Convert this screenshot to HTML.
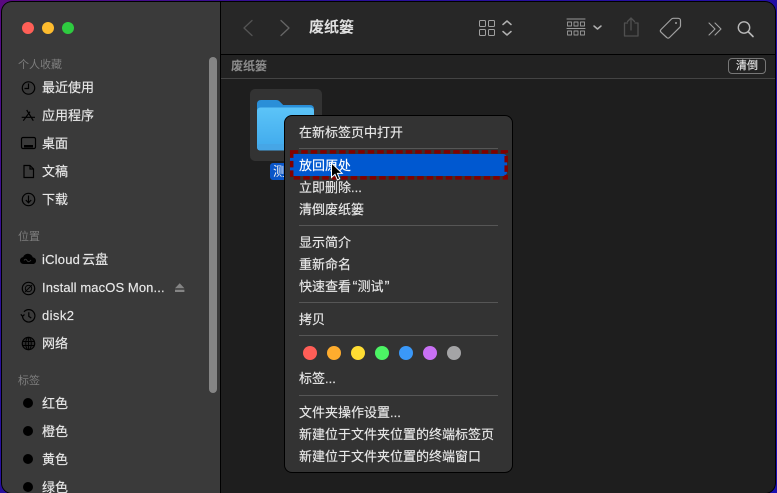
<!DOCTYPE html>
<html><head><meta charset="utf-8">
<style>
*{box-sizing:border-box}
html,body{margin:0;padding:0;width:777px;height:493px;overflow:hidden;background:#1e0f7a}
body{position:relative;font-family:"Liberation Sans","Noto Sans CJK SC",sans-serif}
.a{position:absolute}
.t{position:absolute;white-space:nowrap;line-height:18px;height:18px}
.s{font-size:13px;color:#e8e8e8;left:42px;-webkit-text-stroke:.15px #e8e8e8}
.h{font-size:11px;color:#7d7d7d;left:18px}
.m{font-size:13px;color:#e8e8e8;left:299px;-webkit-text-stroke:.15px #e8e8e8}
.sep{position:absolute;left:299px;width:199px;height:1px;background:#565656}
.d{position:absolute;width:14px;height:14px;border-radius:50%;top:346px}
.b{position:absolute;left:23px;width:10px;height:10px;border-radius:50%;background:#000}
svg{position:absolute;overflow:visible}
</style></head><body>
<div class="a" style="left:0;top:0;width:777px;height:493px;background:linear-gradient(135deg,#5a0a80 0,#2a0f98 25%,#1a0fb0 100%)"></div>
<div class="a" style="left:1px;top:1px;width:775px;height:493px;background:#000;border-radius:11px"></div>
<div class="a" style="left:2px;top:2px;width:773px;height:491px;background:#1e1e1e;border-radius:10px;overflow:hidden">
  <div class="a" style="left:0;top:0;width:218px;height:500px;background:#3a3a3a"></div>
  <div class="a" style="left:218px;top:0;width:1px;height:500px;background:#000"></div>
  <div class="a" style="left:219px;top:0;width:554px;height:52px;background:#272727"></div>
  <div class="a" style="left:219px;top:52px;width:554px;height:1px;background:#000"></div>
  <div class="a" style="left:219px;top:53px;width:554px;height:23px;background:#222"></div>
  <div class="a" style="left:219px;top:76px;width:554px;height:1px;background:#444"></div>
</div>
<div class="a" style="left:22px;top:22px;width:12px;height:12px;border-radius:50%;background:#ff5f57"></div>
<div class="a" style="left:42px;top:22px;width:12px;height:12px;border-radius:50%;background:#febc2e"></div>
<div class="a" style="left:62px;top:22px;width:12px;height:12px;border-radius:50%;background:#2ecb40"></div>
<div class="a" style="left:209px;top:57px;width:8px;height:336px;border-radius:4px;background:#858585"></div>

<div class="t h" style="top:56px">个人收藏</div>
<div class="t s" style="top:79px">最近使用</div>
<div class="t s" style="top:107px">应用程序</div>
<div class="t s" style="top:135px">桌面</div>
<div class="t s" style="top:163px">文稿</div>
<div class="t s" style="top:191px">下载</div>
<div class="t h" style="top:228px">位置</div>
<div class="t s" style="top:251px;letter-spacing:.2px">iCloud<span style="margin-left:2px;letter-spacing:0">云盘</span></div>
<div class="t s" style="top:279px;letter-spacing:.1px">Install macOS Mon...</div>
<div class="t s" style="top:307px;letter-spacing:.4px">disk2</div>
<div class="t s" style="top:335px">网络</div>
<div class="t h" style="top:372px">标签</div>
<div class="t s" style="top:395px">红色</div>
<div class="t s" style="top:423px">橙色</div>
<div class="t s" style="top:451px">黄色</div>
<div class="t s" style="top:479px">绿色</div>

<svg style="left:0;top:0" width="220" height="493" fill="none" stroke="#000" stroke-width="1.2">
<circle cx="28.500" cy="88" r="6.200"/><path d="M28.500 83.500v5h-4"/>
<path d="M26.700 110l6.600 10.700M30 111.700l-6.700 9M21.700 117.300H35"/>
<rect x="21.500" y="137.500" width="14" height="11" rx="1.500"/><rect x="24" y="145" width="9" height="2.500" fill="#000" stroke="none"/>
<path d="M24 165.500h6l3.500 3.500v8.500h-9.500zM30 165.500v3.500h3.500"/>
<circle cx="28.500" cy="199.500" r="6.200"/><path d="M28.500 195.500v7M25.800 200l2.700 2.800 2.700-2.800"/>
<g transform="translate(0 -2)"><path fill="#000" stroke="none" d="M24 266c-2.800 0-4-1.800-4-3.500 0-1.800 1.300-3.200 3.100-3.400.8-2 2.600-3.300 4.700-3.300 2.400 0 4.300 1.500 5 3.600 1.800.2 3.200 1.500 3.200 3.300 0 2-1.400 3.300-3.400 3.300z"/>
<path stroke="#3a3a3a" stroke-width=".9" d="M24 262.500c1-1.700 2-1.700 3 0 1 1.600 2.500 1.600 4-.5"/></g>
<circle cx="28.500" cy="288.500" r="6.200"/><circle cx="28.500" cy="288.500" r="3.200" stroke-width=".9"/><path d="M25 292l7-7" stroke-width=".9"/>
<path d="M24 311.800a6.200 6.200 0 1 1-1.500 4M20.800 314.300l1.700 2 2-1.800M28.800 312.300v4l2.500 1.800"/>
<circle cx="28.500" cy="343.500" r="6.200" fill="#000" fill-opacity=".25"/><ellipse cx="28.500" cy="343.500" rx="2.800" ry="6.200" stroke-width=".9"/><path d="M22.500 341.500h12M22.500 345.500h12M28.500 337v13" stroke-width=".9"/>
</svg>
<svg style="left:175px;top:283px" width="10" height="10"><path d="M4.700 0.300l4.700 5H0z" fill="#858585"/><rect x="0" y="6.700" width="9.400" height="2.300" fill="#858585"/></svg>
<div class="b" style="top:398px"></div>
<div class="b" style="top:426px"></div>
<div class="b" style="top:454px"></div>
<div class="b" style="top:482px"></div>

<svg style="left:240px;top:15px" width="530" height="30" fill="none" stroke-width="1.300" stroke-linecap="round" stroke-linejoin="round">
<path d="M12 5.500L4 13l8 7.500" stroke="#545454"/>
<path d="M41 5.500l8 7.500-8 7.500" stroke="#666"/>
<g stroke="#a0a0a0" stroke-width="1">
<rect x="239.500" y="5.500" width="6" height="6" rx="1"/><rect x="248.500" y="5.500" width="6" height="6" rx="1"/><rect x="239.500" y="14.500" width="6" height="6" rx="1"/><rect x="248.500" y="14.500" width="6" height="6" rx="1"/>
</g>
<path d="M263 9.500l4-3.500 4 3.500M263 16.500l4 3.500 4-3.500" stroke="#b0b0b0" stroke-width="1.500"/>
<g stroke="#9a9a9a" stroke-width=".9">
<path d="M327 4h18M327 13.500h18" stroke-width="1.100"/>
<rect x="327.500" y="7" width="4" height="4"/><rect x="334" y="7" width="4" height="4"/><rect x="340.500" y="7" width="4" height="4"/>
<rect x="327.500" y="16" width="4" height="4"/><rect x="334" y="16" width="4" height="4"/><rect x="340.500" y="16" width="4" height="4"/>
</g>
<path d="M354 11l3.500 3 3.500-3" stroke="#b0b0b0" stroke-width="1.500"/>
<path d="M387.500 8h-3v13h13.500V8h-3M391 15V3.500M387.500 6.500l3.500-3.500 3.500 3.500" stroke="#505050"/>
<path d="M421 18l10.500-10.500c.5-.5 1-.7 1.700-.7h5c1.300 0 2.300 1 2.300 2.300v5c0 .7-.2 1.200-.7 1.700L429.500 26c-.8.800-2 .8-2.800 0l-5.700-5.300c-.8-.8-.8-1.900 0-2.700z" transform="translate(0 -3.500)" stroke="#a0a0a0" stroke-width="1.200"/>
<circle cx="436" cy="8" r="1" fill="#a0a0a0" stroke="none"/>
<path d="M469 8l6 6-6 6M475 8l6 6-6 6" stroke="#a0a0a0" stroke-width="1.100"/>
<circle cx="504" cy="12.500" r="5.700" stroke="#b8b8b8" stroke-width="1.400"/><path d="M508.500 17l4.500 4.500" stroke="#b8b8b8" stroke-width="1.600"/>
</svg>
<div class="t" style="left:309px;top:19px;font-size:15px;font-weight:bold;color:#e0e0e0">废纸篓</div>
<div class="t" style="left:231px;top:57px;font-size:12px;font-weight:bold;color:#8c8c8c">废纸篓</div>
<div class="a" style="left:728px;top:58px;width:38px;height:16px;border:1px solid #777;border-radius:4px"></div>
<div class="t" style="left:736px;top:57px;font-size:11px;color:#e0e0e0;-webkit-text-stroke:.15px #e0e0e0">清倒</div>

<div class="a" style="left:250px;top:89px;width:72px;height:72px;background:#333;border-radius:5px"></div>
<svg style="left:256px;top:99px" width="60" height="52">
<defs><linearGradient id="f" x1="0" y1="0" x2="0" y2="1"><stop offset="0" stop-color="#5cc4f8"/><stop offset="1" stop-color="#3fa9ec"/></linearGradient></defs>
<path d="M1 46V5c0-2.500 1.500-4 4-4h15c2 0 3 .8 4.200 2l3 3H54c2.500 0 4 1.500 4 4v36z" fill="#2a8fd8"/>
<path d="M1 12c0-2 1.500-3.500 3.500-3.500h50c2 0 3.500 1.500 3.500 3.500v36c0 2-1.500 3.500-3.500 3.500h-50C2.500 51.500 1 50 1 48z" fill="url(#f)"/>
<rect x="1" y="45" width="57" height="6.500" rx="3" fill="#46a6e6"/>
</svg>
<div class="a" style="left:270px;top:163px;width:20px;height:17px;background:#0a56c8;border-radius:3px"></div>
<div class="t" style="left:273px;top:163px;font-size:13px;color:#f0f0f0">测</div>

<div class="a" style="left:284px;top:115px;width:229px;height:358px;background:#000;border-radius:8px"></div>
<div class="a" style="left:285px;top:116px;width:227px;height:356px;background:#333;border-radius:7px"></div>
<div class="t m" style="top:124px">在新标签页中打开</div>
<div class="sep" style="top:148px"></div>
<div class="a" style="left:290px;top:154px;width:217px;height:22px;background:#0058d0;border-radius:4px"></div>
<svg style="left:290px;top:150px" width="218" height="30" fill="none"><rect x="1.700" y="1.900" width="214.500" height="26" stroke="#800000" stroke-width="3.500" stroke-dasharray="6.500 3"/></svg>
<div class="t m" style="top:157px;color:#fff;-webkit-text-stroke:.15px #fff">放回原处</div>
<svg style="left:330px;top:162px" width="14" height="20"><path d="M1.500 1v14.500l3.500-3.200 2.400 5.500 2.300-1-2.300-5.400h4.800z" fill="#000" stroke="#fff" stroke-width="1"/></svg>
<div class="t m" style="top:179px">立即删除...</div>
<div class="t m" style="top:201px">清倒废纸篓</div>
<div class="sep" style="top:225px"></div>
<div class="t m" style="top:234px">显示简介</div>
<div class="t m" style="top:256px">重新命名</div>
<div class="t m" style="top:278px">快速查看<span style="font-size:15px;padding-left:1.500px">“</span>测试<span style="font-size:15px;padding-left:1px">”</span></div>
<div class="sep" style="top:302px"></div>
<div class="t m" style="top:311px">拷贝</div>
<div class="sep" style="top:335px"></div>
<div class="d" style="left:303px;background:#ff5e57"></div>
<div class="d" style="left:327px;background:#feac2e"></div>
<div class="d" style="left:351px;background:#ffdd33"></div>
<div class="d" style="left:375px;background:#4cf464"></div>
<div class="d" style="left:399px;background:#3a98f8"></div>
<div class="d" style="left:423px;background:#c870f4"></div>
<div class="d" style="left:447px;background:#a4a4a6"></div>
<div class="t m" style="top:370px">标签...</div>
<div class="sep" style="top:395px"></div>
<div class="t m" style="top:404px">文件夹操作设置...</div>
<div class="t m" style="top:426px">新建位于文件夹位置的终端标签页</div>
<div class="t m" style="top:448px">新建位于文件夹位置的终端窗口</div>
</body></html>
